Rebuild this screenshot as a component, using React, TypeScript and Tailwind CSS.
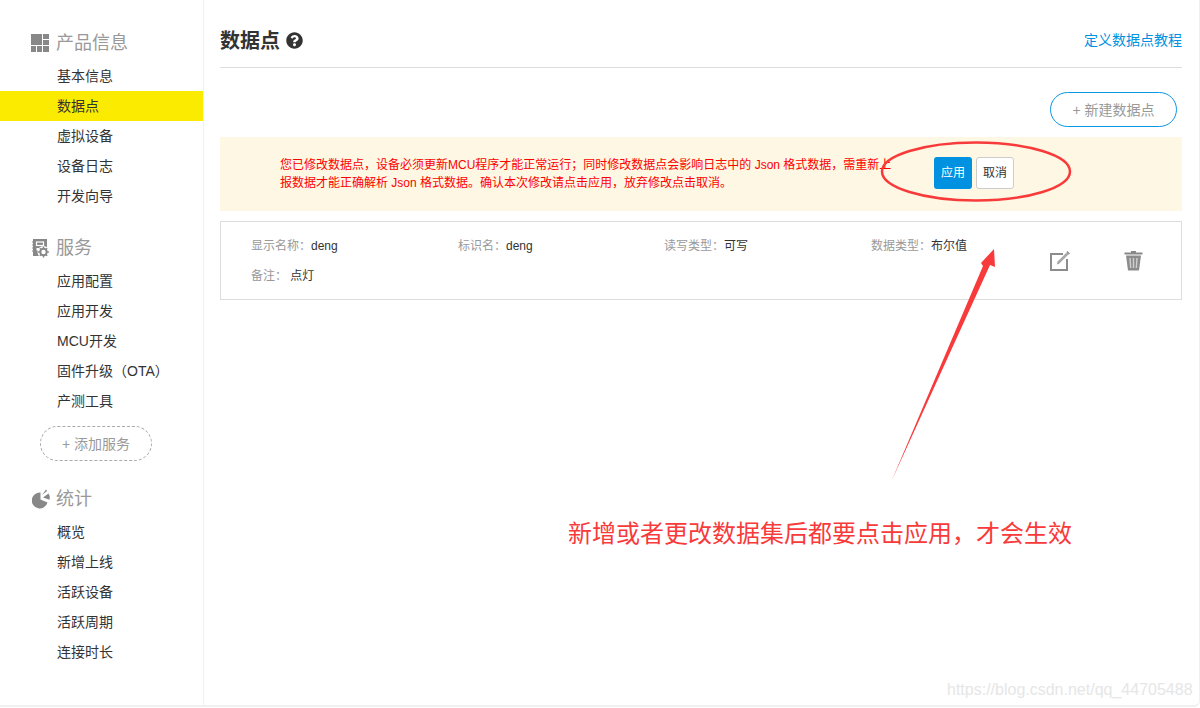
import { FaQuestionCircle } from 'react-icons/fa'

const FONT = '[font-family:"Liberation_Sans","Noto_Sans_CJK_SC",sans-serif]'

function GridIcon() {
  return (
    <svg width="18" height="18" viewBox="0 0 18 18" fill="#888">
      <rect x="0" y="0" width="11" height="11" />
      <rect x="12" y="0" width="6" height="5" />
      <rect x="12" y="6" width="6" height="5" />
      <rect x="0" y="12" width="5" height="6" />
      <rect x="6" y="12" width="5" height="6" />
      <rect x="12" y="12" width="6" height="6" />
    </svg>
  )
}

function ServiceIcon() {
  return (
    <svg className="ml-px" width="17" height="19" viewBox="0 0 17 19">
      <rect x="1" y="0" width="14" height="17" fill="#888" />
      <path d="M0 3h1M0 6h1M0 9h1M0 12h1" stroke="#888" strokeWidth="1" />
      <rect x="4.5" y="3" width="7" height="3.5" fill="none" stroke="#fff" strokeWidth="1.2" />
      <rect x="4.5" y="9" width="2.5" height="2.5" fill="#fff" />
      <circle cx="11.5" cy="13" r="6" fill="#fff" />
      <circle cx="11.5" cy="13" r="3.2" fill="none" stroke="#888" strokeWidth="2" />
      <path d="M11.5 7.6v2M11.5 16.4v2M6.1 13h2M14.9 13h2M7.8 9.3l1.3 1.3M13.9 15.4l1.3 1.3M7.8 16.7l1.3-1.3M13.9 10.6l1.3-1.3" stroke="#888" strokeWidth="1.5" />
    </svg>
  )
}

function PieIcon() {
  return (
    <svg className="ml-px" width="18" height="20" viewBox="0 0 18 20" fill="#888">
      <path d="M8.5 3.5 L8.5 10.5 L15.5 13.5 A8 8 0 1 1 8.5 3.5 Z" />
      <path d="M10 6 L14 0.5 A9 9 0 0 1 15 2 Z" />
      <path d="M11 8.5 L16.5 4.5 A8 8 0 0 1 17.5 10.8 Z" />
    </svg>
  )
}

function EditIcon() {
  return (
    <svg width="20" height="20" viewBox="0 0 20 20">
      <path d="M13 3H1V19H17V8" fill="none" stroke="#8c8c8c" strokeWidth="2" />
      <path d="M8 12 L18 2" stroke="#a8a8a8" strokeWidth="2.6" />
      <path d="M17 0.5 L19.5 3" stroke="#8c8c8c" strokeWidth="1.2" />
      <path d="M7 13.5 L7.6 11.4 L9 12.8 Z" fill="#8c8c8c" />
    </svg>
  )
}

function TrashIcon() {
  return (
    <svg width="19" height="20" viewBox="0 0 19 20">
      <rect x="7" y="0" width="5" height="2" fill="#888" />
      <rect x="0.5" y="1.5" width="18" height="2" fill="#888" />
      <path d="M2 4.5h15l-2 15h-11z" fill="#8c8c8c" />
      <path d="M6 7l.7 10M9.5 7v10M13 7l-.7 10" stroke="#d0d0d0" strokeWidth="1.4" />
    </svg>
  )
}

function NavGroup({ icon, title, items }: { icon: React.ReactNode; title: string; items: string[] }) {
  return (
    <div>
      <div className="flex items-center h-[30px] pt-[2px] pl-[31px] mb-1">
        <span className="w-[25px] flex items-center">{icon}</span>
        <span className="text-[18px] text-[#999]">{title}</span>
      </div>
      {items.map((item) => (
        <div
          key={item}
          className={`h-[30px] flex items-center pl-[57px] text-[14px] text-[#333] ${
            item === '数据点' ? 'bg-[#faeb00]' : ''
          }`}
        >
          {item}
        </div>
      ))}
    </div>
  )
}

function Field({ label, value, className }: { label: string; value: string; className?: string }) {
  return (
    <div className={`text-[12px] leading-[30px] whitespace-nowrap ${className ?? ''}`}>
      <span className="text-[#999]">{label}</span>
      <span className="text-[#333]">{value}</span>
    </div>
  )
}

export default function App() {
  return (
    <div className={`relative h-[708px] w-[1200px] overflow-hidden bg-white ${FONT}`}>
      <div className="flex h-[707px] border-b-2 border-r border-[#f0f0f0] rounded-br-md">
        {/* Sidebar */}
        <aside className="w-[204px] shrink-0 border-r border-[#f0f0f0] pt-[27px]">
          <NavGroup
            icon={<GridIcon />}
            title="产品信息"
            items={['基本信息', '数据点', '虚拟设备', '设备日志', '开发向导']}
          />
          <div className="mt-[21px]">
            <NavGroup
              icon={<ServiceIcon />}
              title="服务"
              items={['应用配置', '应用开发', 'MCU开发', '固件升级（OTA）', '产测工具']}
            />
          </div>
          <div className="ml-10 mt-[10px] w-[112px] h-[35px] pt-[2px] rounded-full border border-dashed border-[#aaa] flex items-center justify-center text-[14px] text-[#999]">
            + 添加服务
          </div>
          <div className="mt-[22px]">
            <NavGroup
              icon={<PieIcon />}
              title="统计"
              items={['概览', '新增上线', '活跃设备', '活跃周期', '连接时长']}
            />
          </div>
        </aside>

        {/* Main */}
        <main className="flex-1 pl-4 pr-[17px]">
          <div className="h-[68px] border-b border-[#ddd] flex items-center justify-between pt-[14px]">
            <div className="flex items-center gap-[6px]">
              <span className="text-[20px] font-bold text-[#333]">数据点</span>
              <FaQuestionCircle className="text-[#333] text-[17px]" />
            </div>
            <a className="text-[14px] text-[#0091e0]">定义数据点教程</a>
          </div>

          <div className="mt-6 flex justify-end pr-[5px]">
            <div className="w-[127px] h-[35px] pt-[2px] rounded-full border border-[#0b97e3] flex items-center justify-center gap-1 text-[14px] text-[#999]">
              <span>+</span>
              <span>新建数据点</span>
            </div>
          </div>

          <div className="mt-[10px] h-[74px] bg-[#fdf7e3] flex items-center pl-[60px]">
            <p className="w-[654px] text-[12px] leading-[18px] text-[#f00] whitespace-nowrap">
              您已修改数据点，设备必须更新MCU程序才能正常运行；同时修改数据点会影响日志中的 Json 格式数据，需重新上
              <br />
              报数据才能正确解析 Json 格式数据。确认本次修改请点击应用，放弃修改点击取消。
            </p>
            <div className="flex gap-1 mb-[2px]">
              <button className="w-[38px] h-8 rounded-[3px] bg-[#0091e0] text-white text-[12px]">应用</button>
              <button className="w-[38px] h-8 rounded-[3px] bg-white border border-[#ccc] text-[#333] text-[12px]">取消</button>
            </div>
          </div>

          <div className="mt-[10px] h-[79px] border border-[#ddd] flex items-center pl-[30px]">
            <div className="w-[799px]">
              <div className="grid grid-cols-[207px_206px_207px_179px]">
                <Field label="显示名称：" value="deng" />
                <Field label="标识名：" value="deng" />
                <Field label="读写类型：" value="可写" />
                <Field label="数据类型：" value="布尔值" />
              </div>
              <Field label="备注：  " value="点灯" className="[white-space:pre]" />
            </div>
            <div className="flex items-center gap-[54px]">
              <EditIcon />
              <TrashIcon />
            </div>
          </div>
        </main>
      </div>

      {/* Annotations over the screenshot */}
      <svg className="absolute left-0 top-0 pointer-events-none" width="1200" height="708">
        <ellipse cx="976" cy="171.5" rx="94" ry="29" fill="none" stroke="#f83a3a" strokeWidth="2.5" />
        <polygon points="891.5,481 983,266 981,263 994,249 995,267 990,265" fill="#f83a3a" />
      </svg>
      <div className="absolute left-[568px] top-[516px] text-[24px] leading-9 text-[#f83a3a] whitespace-nowrap">
        新增或者更改数据集后都要点击应用，才会生效
      </div>
      <div className="absolute left-[947px] top-[680px] text-[16px] leading-5 text-[#e6e6e6] whitespace-nowrap">
        https://blog.csdn.net/qq_44705488
      </div>
    </div>
  )
}
